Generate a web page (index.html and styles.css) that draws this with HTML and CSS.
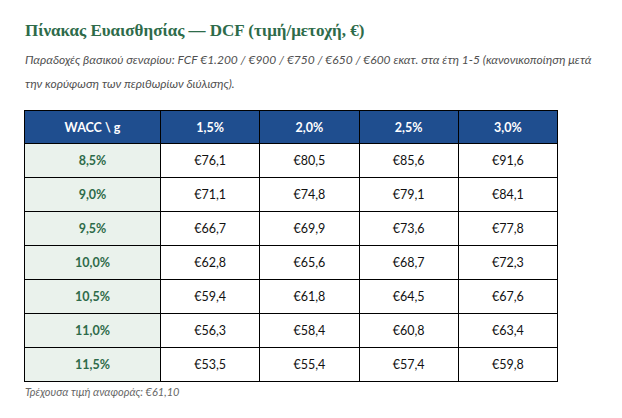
FILE: index.html
```html
<!DOCTYPE html>
<html lang="el">
<head>
<meta charset="utf-8">
<link rel="stylesheet" href="styles.css">
</head>
<body>
<div class="page">
  <h1 class="title">Πίνακας Ευαισθησίας — DCF (τιμή/μετοχή, €)</h1>
  <p class="note">Παραδοχές βασικού σεναρίου: FCF €1.200 / €900 / €750 / €650 / €600 εκατ. στα έτη 1-5 (κανονικοποίηση μετά την κορύφωση των περιθωρίων διύλισης).</p>
  <table class="grid">
    <thead>
      <tr><th>WACC \ g</th><th>1,5%</th><th>2,0%</th><th>2,5%</th><th>3,0%</th></tr>
    </thead>
    <tbody>
      <tr><td class="rowhead">8,5%</td><td>€76,1</td><td>€80,5</td><td>€85,6</td><td>€91,6</td></tr>
      <tr><td class="rowhead">9,0%</td><td>€71,1</td><td>€74,8</td><td>€79,1</td><td>€84,1</td></tr>
      <tr><td class="rowhead">9,5%</td><td>€66,7</td><td>€69,9</td><td>€73,6</td><td>€77,8</td></tr>
      <tr><td class="rowhead">10,0%</td><td>€62,8</td><td>€65,6</td><td>€68,7</td><td>€72,3</td></tr>
      <tr><td class="rowhead">10,5%</td><td>€59,4</td><td>€61,8</td><td>€64,5</td><td>€67,6</td></tr>
      <tr><td class="rowhead">11,0%</td><td>€56,3</td><td>€58,4</td><td>€60,8</td><td>€63,4</td></tr>
      <tr><td class="rowhead">11,5%</td><td>€53,5</td><td>€55,4</td><td>€57,4</td><td>€59,8</td></tr>
    </tbody>
  </table>
  <p class="caption">Τρέχουσα τιμή αναφοράς: €61,10</p>
</div>
</body>
</html>
```

FILE: styles.css
```css
html, body {
  margin: 0;
  padding: 0;
  background: #ffffff;
}

.page {
  padding: 21px 0 0 24px;
  width: 590px;
  font-family: Lato, "Noto Sans", sans-serif;
}

.title {
  margin: 0 0 0 1px;
  font-family: "Liberation Serif", "DejaVu Serif", serif;
  font-weight: bold;
  font-size: 17px;
  line-height: 20px;
  color: #2e6b4a;
}

.note {
  margin: 7px 0 0 1px;
  width: 585px;
  font-size: 12px;
  font-style: italic;
  line-height: 24px;
  color: #505050;
}

.grid {
  margin-top: 14px;
  border-collapse: collapse;
  width: 534px;
  table-layout: fixed;
  font-size: 12.5px;
}

.grid th,
.grid td {
  border: 1.5px solid #000000;
  text-align: center;
  height: 33px;
  padding: 0;
}

.grid th {
  background: #1f4e8f;
  color: #ffffff;
  font-weight: bold;
  height: 32px;
}

.grid th:first-child {
  width: 135px;
}

.grid td {
  color: #111111;
}

.grid .rowhead {
  background: #eaf2ec;
  color: #2e6b4a;
  font-weight: bold;
}

.caption {
  margin: 3px 0 0 1px;
  font-size: 11px;
  font-style: italic;
  color: #666666;
}
```
